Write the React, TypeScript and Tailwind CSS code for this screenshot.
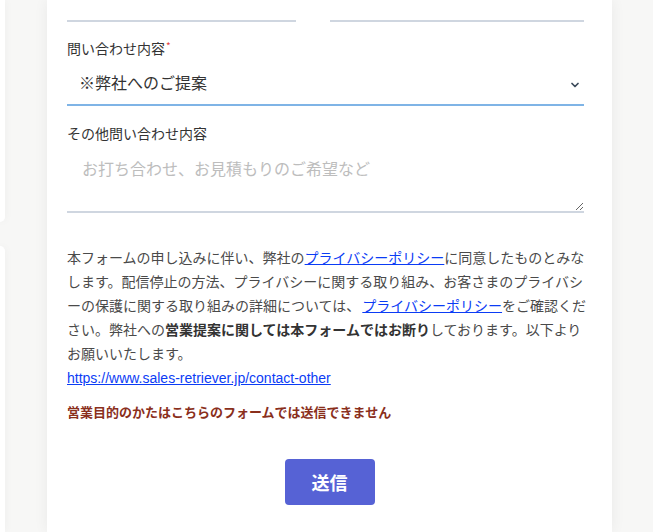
import { ChevronDown } from 'lucide-react'

const jp = { fontFamily: '"Noto Sans CJK JP", "Noto Sans", sans-serif' }

function Field({ label, required, children }: { label: string; required?: boolean; children: React.ReactNode }) {
  return (
    <div className="flex flex-col">
      <label className="text-[14px] leading-[20px] text-[#333]">
        {label}
        {required && <span className="relative -top-[4px] ml-[1px] text-[10px] text-[#e53e3e]">*</span>}
      </label>
      {children}
    </div>
  )
}

export default function App() {
  return (
    <div className="flex min-h-[532px] w-full overflow-hidden bg-[#f7f7f6]" style={jp}>
      {/* neighbouring cards peeking in from the left */}
      <div className="flex w-[5px] flex-col">
        <div className="h-[222px] rounded-br-lg bg-white shadow-[0_0_8px_rgba(0,0,0,0.05)]" />
        <div className="mt-[24px] flex-1 rounded-tr-lg bg-white shadow-[0_0_8px_rgba(0,0,0,0.05)]" />
      </div>

      <div className="ml-[42px] w-[565px] bg-white px-5 pb-[27px] shadow-[0_0_14px_rgba(0,0,0,0.06)]">
        <div className="flex w-[517px] gap-[34px]">
          <input className="h-[22px] w-[229px] border-b-2 border-[#cfd6e0] outline-none" />
          <input className="h-[22px] flex-1 border-b-2 border-[#cfd6e0] outline-none" />
        </div>

        <div className="mt-[16px] w-[517px]">
          <Field label="問い合わせ内容" required>
            <div className="relative">
              <select
                className="h-[46px] w-full appearance-none border-b-2 border-[#7fb4e6] bg-white pl-[12px] text-[16px] text-[#333] outline-none"
                style={jp}
                defaultValue="proposal"
              >
                <option value="proposal">※弊社へのご提案</option>
              </select>
              <ChevronDown
                className="pointer-events-none absolute right-[3px] top-[19px] h-[12px] w-[12px] text-[#3b4a5a]"
                strokeWidth={3.5}
              />
            </div>
          </Field>
        </div>

        <div className="mt-[17px] w-[517px]">
          <Field label="その他問い合わせ内容">
            <textarea
              className="h-[70px] w-full border-b-2 border-[#cfd6e0] px-[15px] pt-[13px] text-[16px] leading-[24px] text-[#333] outline-none placeholder:text-[#bdbdbd]"
              style={jp}
              placeholder="お打ち合わせ、お見積もりのご希望など"
            />
          </Field>
        </div>

        <p className="mt-[32px] whitespace-nowrap text-[14px] leading-[24px] text-[#4a4a4a]">
          本フォームの申し込みに伴い、弊社の
          <a href="#" className="text-[#0b3cf5] underline">プライバシーポリシー</a>
          に同意したものとみな
          <br />
          します。配信停止の方法、プライバシーに関する取り組み、お客さまのプライバシ
          <br />
          ーの保護に関する取り組みの詳細については、
          <a href="#" className="ml-[2px] text-[#0b3cf5] underline">プライバシーポリシー</a>
          をご確認くだ
          <br />
          さい。弊社への<b className="font-bold text-[#333]">営業提案に関しては本フォームではお断り</b>
          しております。以下より
          <br />
          お願いいたします。
          <br />
          <a
            href="#"
            className="text-[14px] text-[#0b3cf5] underline"
            style={{ fontFamily: '"Liberation Sans", Arial, sans-serif' }}
          >
            https://www.sales-retriever.jp/contact-other
          </a>
        </p>

        <p className="mt-[12px] text-[13px] font-bold leading-[20px] text-[#8a2f1c]">
          営業目的のかたはこちらのフォームでは送信できません
        </p>

        <div className="mt-[37px] flex justify-center">
          <button
            type="button"
            className="h-[46px] w-[90px] rounded-[4px] bg-[#5662d5] text-[18px] font-bold text-white"
            style={jp}
          >
            送信
          </button>
        </div>
      </div>
    </div>
  )
}
